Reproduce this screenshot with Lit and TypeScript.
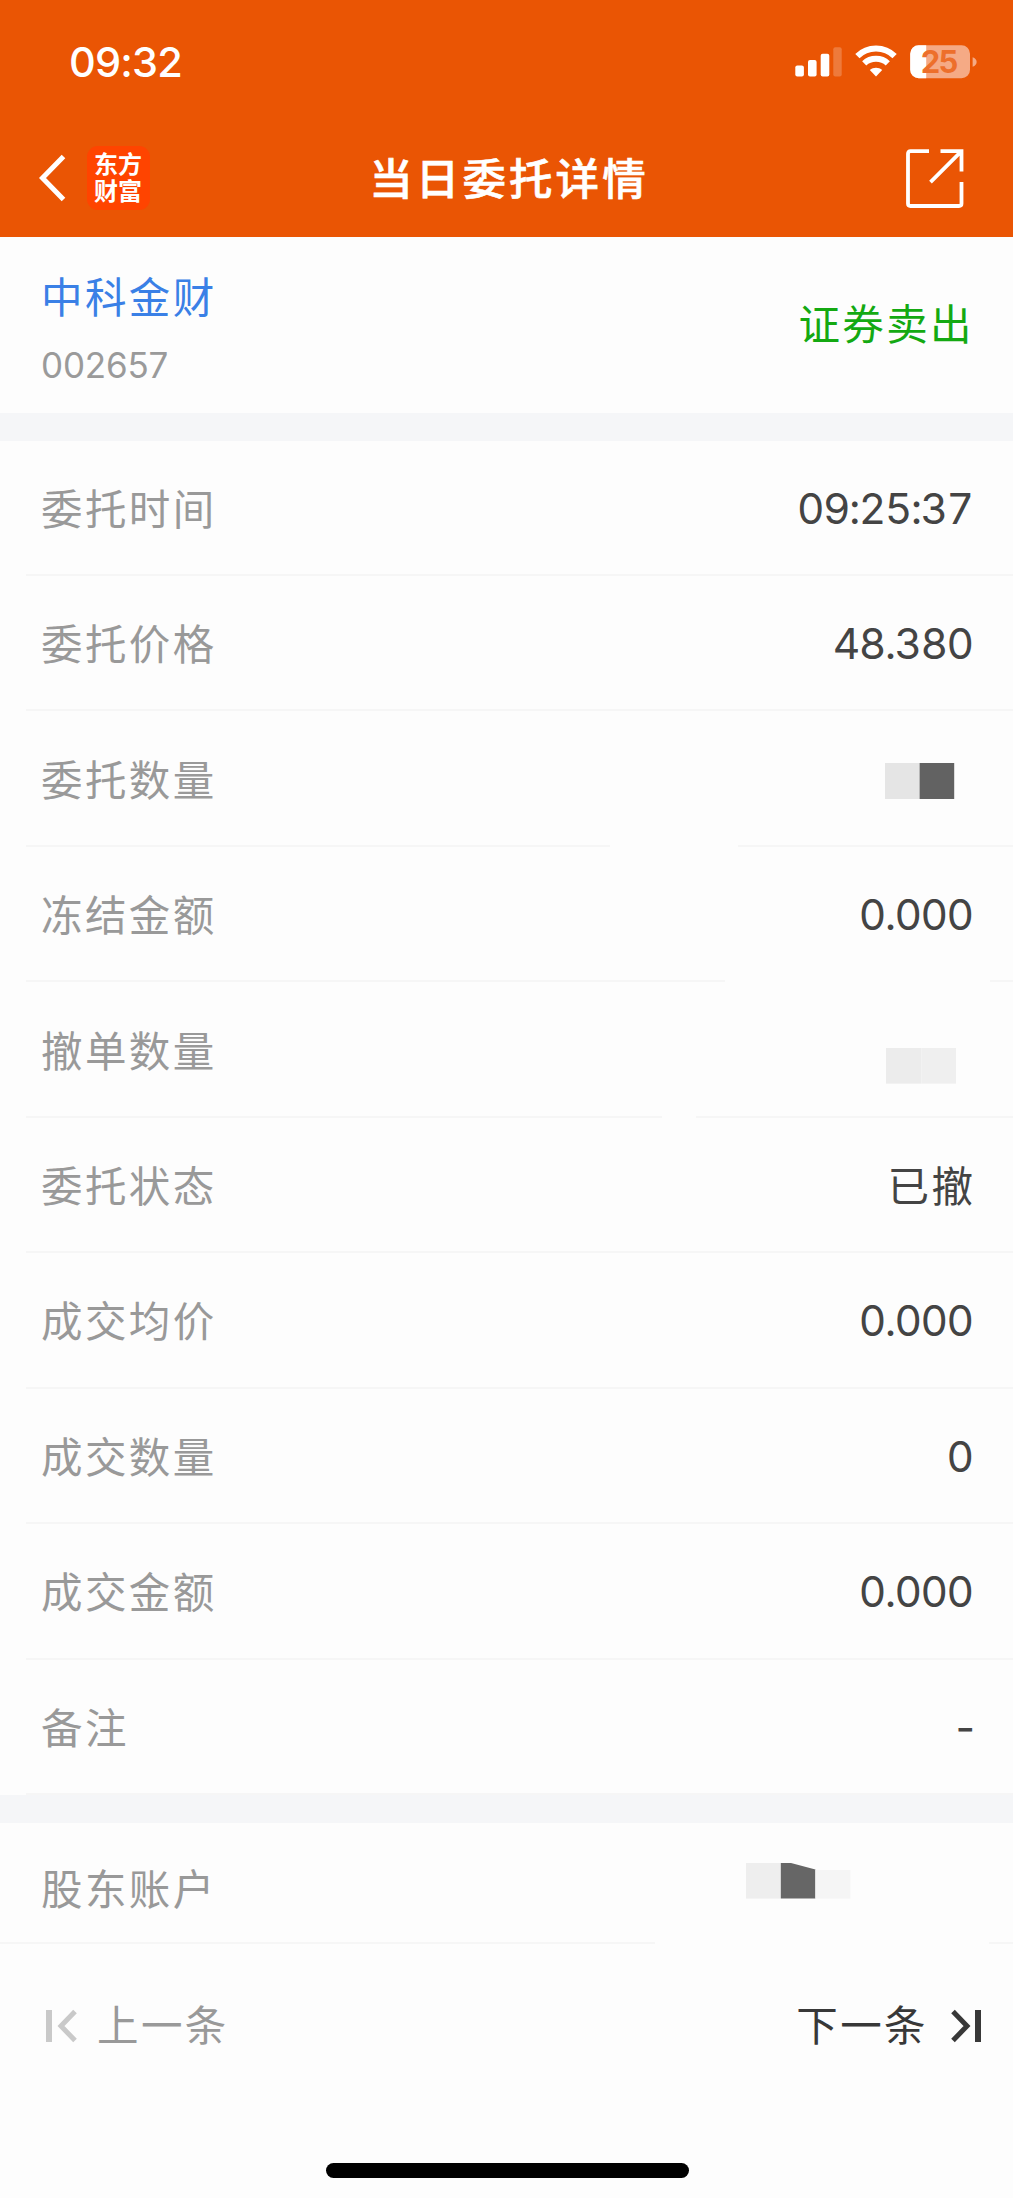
import { LitElement, html, css, svg, nothing } from "lit";
import { customElement, property } from "lit/decorators.js";

type Mosaic = "quantity" | "cancelled" | "account";

interface Entry {
  label: string;
  value?: string;
  // how the value is set: tabular digits unless named otherwise
  style?: "han" | "dash";
  mosaic?: Mosaic;
  // start and end of the erased part of the divider below the row
  gap?: [number, number];
}

const entries: Entry[] = [
  { label: "委托时间", value: "09:25:37" },
  { label: "委托价格", value: "48.380" },
  { label: "委托数量", mosaic: "quantity", gap: [610, 738] },
  { label: "冻结金额", value: "0.000", gap: [725, 990] },
  { label: "撤单数量", mosaic: "cancelled", gap: [662, 696] },
  { label: "委托状态", value: "已撤", style: "han" },
  { label: "成交均价", value: "0.000" },
  { label: "成交数量", value: "0" },
  { label: "成交金额", value: "0.000" },
  { label: "备注", value: "-", style: "dash" },
];

const mosaics = {
  quantity: svg`
    <rect width="34.6" height="36" fill="#e5e5e5"/>
    <rect x="34.6" width="34.6" height="36" fill="#626262"/>`,
  cancelled: svg`
    <rect width="35.4" height="35.6" fill="#ececec"/>
    <rect x="35.4" width="34.6" height="35.6" fill="#efefef"/>`,
  account: svg`
    <rect width="34.8" height="35.6" fill="#eeeeee"/>
    <path d="M34.8 0H45L69.4 6.6V35.6H34.8Z" fill="#666666"/>
    <rect x="69.4" y="7" width="35" height="28.6" fill="#f5f5f5"/>`,
};

@customElement("detail-row")
export class DetailRow extends LitElement {
  static styles = css`
    :host { display: block; }
    .row {
      box-sizing: border-box;
      height: 133.44px;
      padding: 3px 39px 0 41px;
      display: flex;
      align-items: center;
      justify-content: space-between;
    }
    .row.first { height: 133px; }
    .row.account { height: 119px; }
    .label { color: #999; font-size: 41.5px; letter-spacing: 2.4px; line-height: 56px; margin-top: 2px; white-space: nowrap; }
    .account .label { margin-top: 13px; }
    .value {
      color: #444;
      font-size: 42.5px;
      font-variant-numeric: tabular-nums;
      letter-spacing: -1.6px;
      line-height: 56px;
      margin-right: 1.6px;
      white-space: nowrap;
    }
    .value.han { font-size: 41.5px; letter-spacing: 2.4px; margin: 2px -1.4px 0 0; }
    .value.dash { font-variant-numeric: normal; letter-spacing: 0; margin-right: -1px; }
    .mosaic { display: block; height: 36px; }
    .quantity { width: 70px; margin: 3px 19px 0 0; }
    .cancelled { width: 70px; margin: 30px 18px 0 0; }
    .account .mosaic { width: 105px; margin: -6px 123px 0 0; }
    .divider { display: flex; height: 2px; padding-left: 26px; }
    .divider.full { padding-left: 0; }
    .line { background: #f6f6f6; height: 2px; flex: none; }
    .line.rest { flex: 1; }
    .hole { flex: none; }
  `;

  @property({ attribute: false }) entry!: Entry;
  @property() kind = "";

  render() {
    const { label, value, style, mosaic, gap } = this.entry;
    const start = this.kind === "account" ? 0 : 26;
    return html`
      <div class="row ${this.kind}">
        <span class="label">${label}</span>
        ${value ? html`<span class="value ${style ?? ""}">${value}</span>` : nothing}
        ${mosaic ? html`<svg class="mosaic ${mosaic}">${mosaics[mosaic]}</svg>` : nothing}
      </div>
      <div class="divider ${this.kind === "account" ? "full" : ""}">
        ${gap
          ? html`<i class="line" style="width:${gap[0] - start}px"></i>
              <i class="hole" style="width:${gap[1] - gap[0]}px"></i>`
          : nothing}
        <i class="line rest"></i>
      </div>`;
  }
}

@customElement("app-root")
export class AppRoot extends LitElement {
  static styles = css`
    :host {
      display: flex;
      flex-direction: column;
      height: 2198px;
      background: #fdfdfd;
      font-family: Inter, "Noto Sans CJK SC", sans-serif;
      overflow: hidden;
    }
    svg { display: block; }
    .top { background: #ea5504; height: 237px; flex: none; }
    .status {
      box-sizing: border-box;
      height: 119px;
      padding: 5px 36px 0 69px;
      display: flex;
      align-items: center;
      justify-content: space-between;
    }
    .time { color: #fff; font-size: 41.5px; font-weight: 500; letter-spacing: -0.8px; line-height: 50px; }
    .indicators { display: flex; align-items: center; gap: 13px; }
    .battery { overflow: visible; }
    .battery-text { font-size: 31px; font-weight: 700; letter-spacing: -1.8px; fill: #ed6f2b; }
    .nav {
      box-sizing: border-box;
      height: 118px;
      padding: 0 47px 0 36px;
      display: grid;
      grid-template-columns: 1fr auto 1fr;
      align-items: center;
    }
    .back { display: flex; align-items: center; gap: 19px; }
    .logo {
      box-sizing: border-box;
      width: 63px;
      height: 64px;
      padding: 5px 0 0 7px;
      border-radius: 11px;
      background: #ff4400;
      color: #fff;
      font-size: 24px;
      font-weight: 700;
      line-height: 27px;
    }
    .title {
      margin: 2px 0 0 16px;
      color: #fff;
      font-size: 43.5px;
      font-weight: 500;
      -webkit-text-stroke: 0.6px #fff;
      letter-spacing: 3.1px;
      line-height: 60px;
    }
    .share { justify-self: end; }
    .stock {
      box-sizing: border-box;
      height: 176px;
      padding: 0 39px 0 41px;
      display: flex;
      align-items: center;
      justify-content: space-between;
    }
    .name { color: #3a80e6; font-size: 41.5px; letter-spacing: 2.4px; line-height: 60px; margin-top: 4px; }
    .code { color: #9a9a9a; font-size: 35px; letter-spacing: -0.2px; line-height: 44px; margin-top: 15px; }
    .side { color: #14a912; font-size: 41.5px; letter-spacing: 2.4px; line-height: 60px; }
    .band { height: 28px; background: #f5f6f8; flex: none; }
    .pager {
      height: 164px;
      padding: 0 31px 0 45px;
      display: flex;
      align-items: center;
      justify-content: space-between;
    }
    .turn { display: flex; align-items: center; font-size: 41.5px; letter-spacing: 2.4px; line-height: 60px; }
    .prev { color: #999; gap: 19px; }
    .next { color: #383838; gap: 21px; }
    .home { width: 363px; height: 15px; border-radius: 8px; background: #000; margin: auto auto 20px; transform: translateX(1px); }
  `;

  render() {
    return html`
      <header class="top">
        <div class="status">
          <span class="time">09:32</span>
          <div class="indicators">
            <svg width="47" height="34" viewBox="0 0 47 34" fill="#fff">
              <rect x="0.3" y="20.5" width="8.6" height="11" rx="2"/>
              <rect x="13" y="15" width="8.6" height="16.5" rx="2"/>
              <rect x="25.7" y="8.7" width="8.6" height="22.8" rx="2"/>
              <rect x="38.3" y="2.3" width="8.4" height="29.2" rx="2" opacity="0.22"/>
            </svg>
            <svg width="42" height="34" viewBox="0 0 42 34" fill="none" stroke="#fff">
              <path d="M2.4 11.2C12.5 1 29.5 1 39.6 11.2" stroke-width="6"/>
              <path d="M9.2 18.3C15.6 12.2 26.4 12.2 32.8 18.3" stroke-width="6"/>
              <path d="M21 31.4L14.8 25.1C18.3 22 23.7 22 27.2 25.1Z" fill="#fff" stroke="none"/>
            </svg>
            <svg class="battery" width="67" height="34" viewBox="0 0 67 34">
              <rect x="0.2" y="0.3" width="59.8" height="33" rx="8.5" fill="#f5aa85"/>
              <path d="M16.2 0.3H8.7A8.5 8.5 0 0 0 0.2 8.8V24.8A8.5 8.5 0 0 0 8.7 33.3H16.2Z" fill="#fff"/>
              <path d="M62.6 12.2C68 14 68 20 62.6 21.8Z" fill="#f5aa85"/>
              <text class="battery-text" x="10.8" y="28">25</text>
            </svg>
          </div>
        </div>
        <div class="nav">
          <div class="back">
            <svg width="32" height="50" viewBox="0 0 32 50" fill="none" stroke="#fff" stroke-width="5">
              <path d="M27.5 3.5L6.5 25L27.5 46.5"/>
            </svg>
            <div class="logo">东方<br>财富</div>
          </div>
          <span class="title">当日委托详情</span>
          <svg class="share" width="60" height="60" viewBox="0 0 60 60" fill="none" stroke="#fff" stroke-width="3.8">
            <path d="M23 4.2H4.5Q2 4.2 2 6.7V56.5Q2 59 4.5 59H53Q55.5 59 55.5 56.5V35" transform="translate(0 -1)"/>
            <path d="M34.5 4.2H55.5V24.5M55 4.7L24.5 35.2" transform="translate(0 -1)"/>
          </svg>
        </div>
      </header>
      <section class="stock">
        <div>
          <div class="name">中科金财</div>
          <div class="code">002657</div>
        </div>
        <div class="side">证券卖出</div>
      </section>
      <div class="band"></div>
      <section>
        ${entries.map(
          (entry, i) => html`<detail-row .entry=${entry} kind=${i === 0 ? "first" : ""}></detail-row>`,
        )}
      </section>
      <div class="band"></div>
      <detail-row kind="account" .entry=${{ label: "股东账户", mosaic: "account", gap: [655, 989] } as Entry}></detail-row>
      <nav class="pager">
        <div class="turn prev">
          <svg width="33" height="34" viewBox="0 0 33 34" fill="none" stroke="#c9c9c9" stroke-width="5">
            <path d="M4 1V33" stroke-width="6"/>
            <path d="M30 2.5L16 17L30 31.5"/>
          </svg>
          <span>上一条</span>
        </div>
        <div class="turn next">
          <span>下一条</span>
          <svg width="33" height="34" viewBox="0 0 33 34" fill="none" stroke="#383838" stroke-width="5">
            <path d="M4 2.5L18 17L4 31.5"/>
            <path d="M29 1V33" stroke-width="6"/>
          </svg>
        </div>
      </nav>
      <div class="home"></div>`;
  }
}
